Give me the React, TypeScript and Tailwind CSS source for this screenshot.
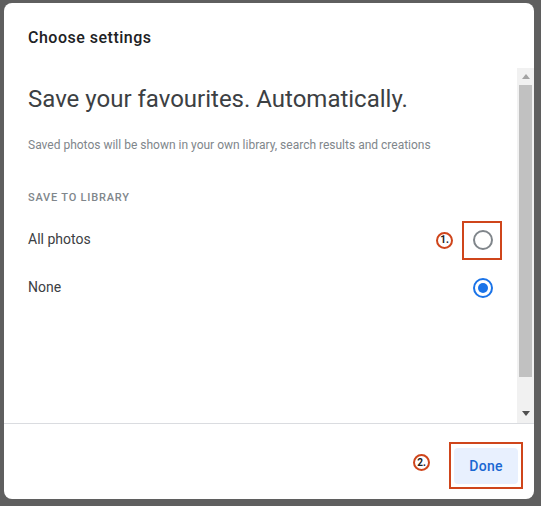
import React from "react";

export default function App() {
  return (
    <div className="w-[541px] h-[506px] bg-[#5f5f5f] pt-[3px] pl-[4px] pr-[7px] pb-[7px]" style={{ fontFamily: "Roboto, 'Liberation Sans', sans-serif" }}>
      <div className="w-full h-full bg-white rounded-[8px] flex flex-col overflow-hidden">
        {/* Header */}
        <div className="h-[65px] shrink-0 pl-[24px] pt-[23px]">
          <div className="text-[16px] leading-[24px] font-medium text-[#202124] tracking-[0.5px]">Choose settings</div>
        </div>
        {/* Scroll area */}
        <div className="flex flex-row h-[355px] shrink-0">
          <div className="flex-1 pl-[24px] pr-[24px] pt-[17px]">
            <div className="text-[24px] leading-[28px] text-[#3c4043] font-normal">Save your favourites. Automatically.</div>
            <div className="mt-[22px] text-[12px] leading-[20px] text-[#80868b]">Saved photos will be shown in your own library, search results and creations</div>
            <div className="mt-[35px] text-[11px] leading-[16px] font-medium tracking-[0.8px] text-[#80868b] uppercase">Save to library</div>
            <div className="mt-[9px] h-[48px] flex items-center justify-between">
              <span className="text-[14px] text-[#3c4043]">All photos</span>
              <div className="relative w-[20px] h-[20px] mt-[1px]">
                <div className="w-[20px] h-[20px] rounded-full border-2 border-[#80868b]" />
                <div className="absolute left-[-11px] top-[-9px] w-[40px] h-[39px] border-2 border-[#cf451b]" />
                <div className="absolute left-[-37px] top-[2px] w-[17px] h-[17px] rounded-full border-2 border-[#cf451b] flex items-center justify-center text-[10px] font-bold leading-none text-[#202124]">1.</div>
              </div>
            </div>
            <div className="h-[48px] flex items-center justify-between">
              <span className="text-[14px] text-[#3c4043]">None</span>
              <div className="w-[20px] h-[20px] mt-[1px] rounded-full border-2 border-[#1a73e8] flex items-center justify-center">
                <div className="w-[10px] h-[10px] rounded-full bg-[#1a73e8]" />
              </div>
            </div>
          </div>
          {/* Scrollbar */}
          <div className="w-[17px] shrink-0 bg-[#f1f1f1] flex flex-col">
            <div className="h-[17px] flex items-center justify-center">
              <svg width="8" height="5" viewBox="0 0 8 5"><polygon points="4,0 8,5 0,5" fill="#a3a3a3" /></svg>
            </div>
            <div className="flex-1 flex flex-col px-[2px]">
              <div className="h-[292px] bg-[#c1c1c1]" />
            </div>
            <div className="h-[20px] flex items-center justify-center">
              <svg width="8" height="5" viewBox="0 0 8 5"><polygon points="0,0 8,0 4,5" fill="#505050" /></svg>
            </div>
          </div>
        </div>
        {/* Footer */}
        <div className="flex-1 border-t border-[#dadce0] flex justify-end pr-[16px] pt-[24px]">
          <div className="relative h-[36px]">
            <button className="h-[36px] w-[64px] rounded-[4px] bg-[#e8f0fe] text-[#1967d2] text-[14px] font-medium tracking-[0.25px]">Done</button>
            <div className="absolute left-[-5px] top-[-6px] right-[-5px] bottom-[-5px] border-2 border-[#cf451b]" />
            <div className="absolute left-[-41px] top-[6px] w-[17px] h-[17px] rounded-full border-2 border-[#cf451b] flex items-center justify-center text-[10px] font-bold leading-none text-[#202124]">2.</div>
          </div>
        </div>
      </div>
    </div>
  );
}
